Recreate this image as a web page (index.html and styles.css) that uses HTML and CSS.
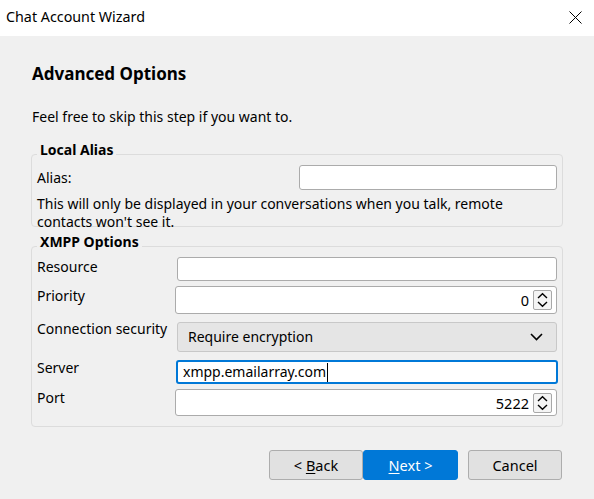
FILE: index.html
```html
<!DOCTYPE html>
<html lang="en">
<head>
<meta charset="utf-8">
<title>Chat Account Wizard</title>
<link rel="stylesheet" href="styles.css">
</head>
<body>
<div class="window">
  <div class="titlebar">
    <span class="title">Chat Account Wizard</span>
    <svg class="close" width="13" height="13" viewBox="0 0 13 13" aria-hidden="true">
      <path d="M0.5 0.5 L12.5 12.5 M12.5 0.5 L0.5 12.5" stroke="#000" stroke-width="1" fill="none"/>
    </svg>
  </div>
  <div class="page">
    <h1 class="heading">Advanced Options</h1>
    <p class="intro">Feel free to skip this step if you want to.</p>

    <fieldset class="group group-alias">
      <legend class="legend">Local Alias</legend>
      <div class="alias-row">
        <span class="label">Alias:</span>
        <div class="field alias-field"></div>
      </div>
      <p class="desc">This will only be displayed in your conversations when you talk, remote<br>contacts won't see it.</p>
    </fieldset>

    <fieldset class="group group-xmpp">
      <legend class="legend">XMPP Options</legend>
      <div class="form">
        <div class="row row-resource">
          <span class="label">Resource</span>
          <div class="field f-resource"></div>
        </div>
        <div class="row row-priority">
          <span class="label">Priority</span>
          <div class="field num f-priority">
            <span class="value">0</span>
            <span class="spin">
              <svg width="11" height="16" viewBox="0 0 11 16" aria-hidden="true">
                <path d="M1 6 L5.5 1.8 L10 6" stroke="#000" stroke-width="1.4" fill="none"/>
                <path d="M1 10 L5.5 14.2 L10 10" stroke="#000" stroke-width="1.4" fill="none"/>
              </svg>
            </span>
          </div>
        </div>
        <div class="row row-security">
          <span class="label">Connection security</span>
          <div class="select">
            <span class="select-text">Require encryption</span>
            <svg class="chev" width="13" height="8" viewBox="0 0 13 8" aria-hidden="true">
              <path d="M1 1 L6.5 6.5 L12 1" stroke="#000" stroke-width="1.6" fill="none"/>
            </svg>
          </div>
        </div>
        <div class="row row-server">
          <span class="label">Server</span>
          <div class="field focus f-server"><span class="text">xmpp.emailarray.com</span><span class="caret"></span></div>
        </div>
        <div class="row row-port">
          <span class="label">Port</span>
          <div class="field num f-port">
            <span class="value">5222</span>
            <span class="spin">
              <svg width="11" height="16" viewBox="0 0 11 16" aria-hidden="true">
                <path d="M1 6 L5.5 1.8 L10 6" stroke="#000" stroke-width="1.4" fill="none"/>
                <path d="M1 10 L5.5 14.2 L10 10" stroke="#000" stroke-width="1.4" fill="none"/>
              </svg>
            </span>
          </div>
        </div>
      </div>
    </fieldset>

    <div class="buttons">
      <button class="btn btn-back">&lt; <u>B</u>ack</button>
      <button class="btn btn-next"><u>N</u>ext &gt;</button>
      <button class="btn btn-cancel">Cancel</button>
    </div>
  </div>
</div>
</body>
</html>
```

FILE: styles.css
```css
* { box-sizing: border-box; }

html, body {
  margin: 0;
  padding: 0;
}

body {
  font-family: "Noto Sans", "Open Sans", sans-serif;
  font-size: 14px;
  color: #000;
  background: #f0f0f0;
  width: 594px;
  height: 499px;
  overflow: hidden;
}

.window {
  width: 594px;
  height: 499px;
  background: #f0f0f0;
}

.titlebar {
  height: 36px;
  background: #fff;
  display: flex;
  align-items: center;
  justify-content: space-between;
  padding: 0 12px 2px 6px;
}

.title {
  font-size: 14.3px;
  line-height: 20px;
}

.close {
  display: block;
}

.page {
  padding: 0 31px;
}

.heading {
  margin: 26px 0 0 1px;
  font-size: 17px;
  font-weight: bold;
  line-height: 24px;
}

.intro {
  margin: 21px 0 0 1px;
  line-height: 20px;
}

.group {
  margin: 0;
  border: 1px solid #dcdcdc;
  border-radius: 4px;
  padding: 0 5px 0 5px;
  min-width: 0;
}

.group-alias {
  margin-top: 14px;
}

.group-xmpp {
  margin-top: 6px;
  padding-bottom: 10px;
}

.legend {
  font-weight: bold;
  line-height: 18px;
  padding: 0 3px 8px 3px;
  font-size: 14px;
}

.label {
  line-height: 20px;
  white-space: nowrap;
}

.alias-row {
  margin-top: -2px;
  height: 25px;
  display: flex;
  align-items: center;
  justify-content: space-between;
}

.field {
  background: #fff;
  border: 1px solid #ababab;
  border-radius: 3px;
}

.alias-field {
  width: 258px;
  height: 25px;
}

.desc {
  margin: 5px 0 0 0;
  height: 31px;
  line-height: 18px;
  white-space: nowrap;
}

.form {
  margin-top: -2px;
  display: grid;
  grid-template-columns: 138px 1fr;
  row-gap: 0;
}

.row {
  display: contents;
}

.row .label {
  align-self: start;
}

.f-resource {
  height: 24px;
  margin-left: 2px;
}

.row-priority .label,
.row-priority .field {
  margin-top: 5px;
}

.f-priority {
  height: 28px;
}

.num {
  display: flex;
  align-items: center;
  justify-content: flex-end;
  padding-right: 4px;
}

.value {
  font-size: 14.5px;
  line-height: 20px;
  margin-right: 4px;
}

.spin {
  width: 19px;
  height: 20px;
  border: 1px solid #a8a8a8;
  border-radius: 2px;
  background: #f4f4f4;
  display: flex;
  align-items: center;
  justify-content: center;
}

.spin svg {
  display: block;
}

.row-security .label {
  margin-top: 5px;
}

.select {
  margin-top: 8px;
  margin-left: 2px;
  height: 30px;
  background: #e5e5e5;
  border: 1px solid #c8c8c8;
  border-radius: 3px;
  display: flex;
  align-items: center;
  justify-content: space-between;
  padding: 0 13px 0 10px;
}

.select-text {
  font-size: 14px;
  line-height: 20px;
}

.chev {
  display: block;
}

.row-server .label {
  margin-top: 6px;
}

.f-server {
  margin-top: 8px;
  margin-left: 1px;
  margin-right: -1px;
  height: 24px;
  border: 2px solid #0078d7;
  display: flex;
  align-items: center;
  padding-left: 5px;
}

.f-server .text {
  font-size: 14px;
  line-height: 20px;
}

.caret {
  width: 1px;
  height: 19px;
  background: #000;
  margin-left: 1px;
}

.row-port .label {
  margin-top: 4px;
}

.f-port {
  margin-top: 5px;
  height: 27px;
}

.buttons {
  margin-top: 23px;
  margin-right: 1px;
  display: flex;
  justify-content: flex-end;
}

.btn {
  font-family: inherit;
  font-size: 14.5px;
  height: 30px;
  width: 94px;
  background: #e1e1e1;
  border: 1px solid #adadad;
  border-radius: 3px;
  color: #000;
  padding: 0;
  line-height: 20px;
}

.btn u {
  text-decoration-thickness: 1px;
  text-underline-offset: 2px;
}

.btn-next {
  width: 95px;
  background: #0078d7;
  border-color: #0078d7;
  color: #fff;
}

.btn-cancel {
  margin-left: 10px;
}
```
